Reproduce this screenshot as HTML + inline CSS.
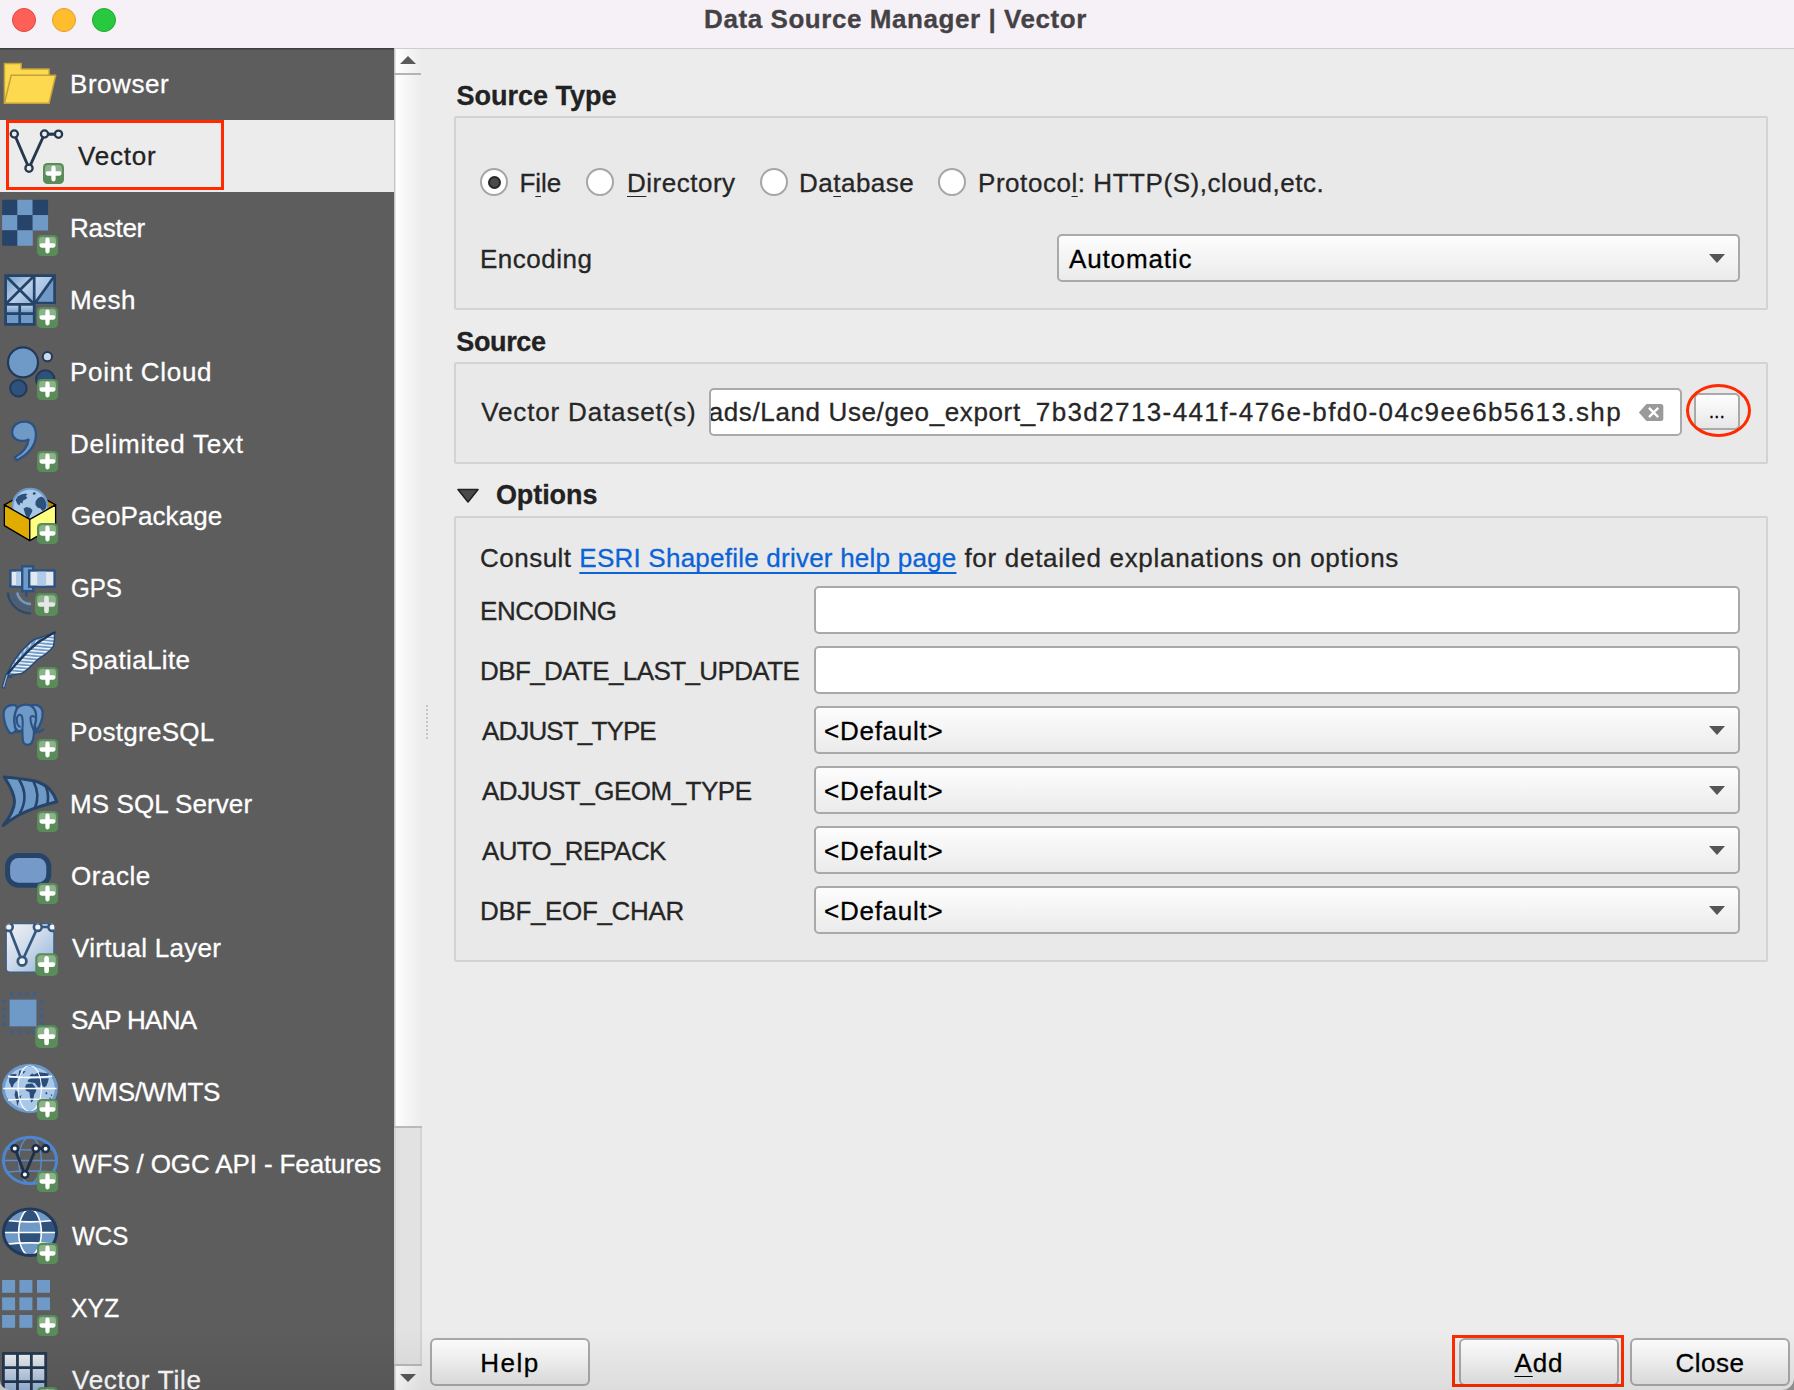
<!DOCTYPE html>
<html lang="en">
<head>
<meta charset="utf-8">
<title>Data Source Manager | Vector</title>
<style>
*{box-sizing:border-box;margin:0;padding:0}
html,body{width:1794px;height:1390px;overflow:hidden;background:#ececec}
body{font-family:"Liberation Sans",sans-serif;color:#262626;position:relative;font-size:26px;-webkit-text-stroke:0.3px currentColor}
.abs{position:absolute}
#titlebar{position:absolute;left:0;top:0;width:1794px;height:49px;background:#f6f0f7;border-bottom:1px solid #cfcbd0}
#title{position:absolute;left:0;width:1791px;top:4px;text-align:center;font-weight:bold;font-size:26px;line-height:30px;color:#444245;letter-spacing:0.56px}
.tl{position:absolute;top:8px;width:24px;height:24px;border-radius:50%}
#sidebar{position:absolute;left:0;top:48px;width:394px;height:1342px;background:#5d5d5d;overflow:hidden;box-shadow:inset 0 1.5px 0 #3f3f3f}
.item{position:absolute;left:0;width:394px;height:72px;color:#fff;font-size:26px;line-height:72px;white-space:nowrap}
.item span{position:absolute;left:70px;top:0;letter-spacing:0.45px}
.item.sel{background:#ececec;color:#222}
.item svg{position:absolute;left:0;top:0;width:72px;height:72px}
#vscroll{position:absolute;left:394px;top:49px;width:28px;height:1341px;background:linear-gradient(90deg,#c6c6c6 0,#c6c6c6 1px,#ffffff 2px,#f6f6f6 45%,#ececec 100%)}
.lbl{position:absolute;white-space:nowrap;line-height:32px;font-size:26px;color:#262626;letter-spacing:0.3px}
.hdr{position:absolute;white-space:nowrap;line-height:32px;font-size:27px;font-weight:bold;color:#222;letter-spacing:0.2px}
.gb{position:absolute;left:454px;width:1314px;background:#e9e9e9;border:2px solid #d3d3d3;border-radius:2px}
.radio{position:absolute;width:28px;height:28px;border-radius:50%;background:#fff;border:2px solid #a6a6a6}
.radio.on::after{content:"";position:absolute;left:5.5px;top:5.5px;width:9px;height:9px;border-radius:50%;background:#4a4a4a;border:2px solid #262626}
.field{position:absolute;background:#fff;border:2px solid #a9a9a9;border-radius:5px;height:48px}
.combo{position:absolute;border:2px solid #a9a9a9;border-radius:5px;height:48px;background:linear-gradient(#fdfdfd,#f4f4f4 50%,#ebebeb);font-size:26px;line-height:46px;padding-left:8px;color:#000;letter-spacing:0.3px}
.combo::after{content:"";position:absolute;right:13px;top:18px;border-left:8px solid transparent;border-right:8px solid transparent;border-top:9px solid #555}
.btn{position:absolute;border:2px solid #a9a9a9;border-radius:6px;background:linear-gradient(#fdfdfd,#f3f3f3 50%,#e6e6e6);font-size:26px;color:#000;text-align:center;letter-spacing:0.3px}
u{text-decoration:underline;text-underline-offset:3.5px;text-decoration-thickness:1.3px}
a{color:#0a64d8;text-decoration:underline;text-underline-offset:5px;text-decoration-thickness:1.5px}
.red{position:absolute;border:3px solid #ff2a00}
</style>
</head>
<body>
<div id="titlebar">
  <div class="tl" style="left:12px;background:#fe5f57;border:1px solid #e2463f"></div>
  <div class="tl" style="left:52px;background:#febc2e;border:1px solid #dfa123"></div>
  <div class="tl" style="left:92px;background:#28c840;border:1px solid #1dad2b"></div>
  <div id="title">Data Source Manager | Vector</div>
</div>

<div id="sidebar">
<div class="item" id="it-browser" style="top:0px"><!--I:browser--><svg viewBox="0 0 72 72" ><path d="M4.4 15.6 H21.2 V20.9 H49.1 V55.2 H4.4 Z" fill="#fdd94f" stroke="#c2a23a" stroke-width="1.5" stroke-linejoin="round"/><path d="M11.2 27.3 H55.7 L49.1 55.2 H4.4 Z" fill="#fdd94f" stroke="#c2a23a" stroke-width="1.5" stroke-linejoin="round"/></svg><!--/I:browser--><span style="left:70px;letter-spacing:0.54px">Browser</span></div>
<div class="item sel" id="it-vector" style="top:72px"><!--I:vector--><svg viewBox="0 0 72 72" ><path d="M14.3 14 L29 48.2 L44.5 14 L58.5 14.2" fill="none" stroke="#24384f" stroke-width="2.9" stroke-linejoin="round"/><circle cx="14.3" cy="14" r="3.6" fill="#ececec" stroke="#24384f" stroke-width="2.3"/><circle cx="44.5" cy="14" r="3.6" fill="#ececec" stroke="#24384f" stroke-width="2.3"/><circle cx="58.5" cy="14.2" r="3.6" fill="#ececec" stroke="#24384f" stroke-width="2.3"/><circle cx="29" cy="48.2" r="3.6" fill="#ececec" stroke="#24384f" stroke-width="2.3"/><g transform="translate(43 43) scale(1.0000)"><rect x="0" y="0" width="21" height="21" rx="4.6" fill="#5a8c5a"/><path d="M2 10.5 V5.4 a3.4 3.4 0 0 1 3.4-3.4 h10.2 a3.4 3.4 0 0 1 3.4 3.4 V10.5 Z" fill="#8bb28a"/><path d="M10.5 4.65 V16.35 M4.65 10.5 H16.35" stroke="#fff" stroke-width="4.3" stroke-linecap="round" fill="none"/></g></svg><!--/I:vector--><span style="left:78px;letter-spacing:0.77px">Vector</span></div>
<div class="item" id="it-raster" style="top:144px"><!--I:raster--><svg viewBox="0 0 72 72" ><rect x="2.10" y="7.80" width="15.45" height="15.45" fill="#26446a"/><rect x="17.35" y="7.80" width="15.45" height="15.45" fill="#6f9ac8"/><rect x="32.60" y="7.80" width="15.45" height="15.45" fill="#26446a"/><rect x="2.10" y="23.05" width="15.45" height="15.45" fill="#6f9ac8"/><rect x="17.35" y="23.05" width="15.45" height="15.45" fill="#26446a"/><rect x="32.60" y="23.05" width="15.45" height="15.45" fill="#6f9ac8"/><rect x="2.10" y="38.30" width="15.45" height="15.45" fill="#26446a"/><rect x="17.35" y="38.30" width="15.45" height="15.45" fill="#6f9ac8"/><g transform="translate(37 43) scale(1.0000)"><rect x="0" y="0" width="21" height="21" rx="4.6" fill="#5a8c5a"/><path d="M2 10.5 V5.4 a3.4 3.4 0 0 1 3.4-3.4 h10.2 a3.4 3.4 0 0 1 3.4 3.4 V10.5 Z" fill="#8bb28a"/><path d="M10.5 4.65 V16.35 M4.65 10.5 H16.35" stroke="#fff" stroke-width="4.3" stroke-linecap="round" fill="none"/></g></svg><!--/I:raster--><span style="left:70px;letter-spacing:-0.27px">Raster</span></div>
<div class="item" id="it-mesh" style="top:216px"><!--I:mesh--><svg viewBox="0 0 72 72" ><defs><linearGradient id="mg1" x1="0" y1="0" x2="1" y2="1"><stop offset="0" stop-color="#6f9ac8"/><stop offset="0.55" stop-color="#b9d0ea"/><stop offset="1" stop-color="#8fb1d9"/></linearGradient><linearGradient id="mg2" x1="0" y1="0" x2="1" y2="1"><stop offset="0" stop-color="#c4d7ee"/><stop offset="0.45" stop-color="#a9c5e6"/><stop offset="0.5" stop-color="#6f9ac8"/><stop offset="1" stop-color="#6f9ac8"/></linearGradient><linearGradient id="mg3" x1="0" y1="0" x2="0" y2="1"><stop offset="0" stop-color="#c0d4ec"/><stop offset="1" stop-color="#6f9ac8"/></linearGradient></defs><rect x="5.6" y="11.7" width="28.6" height="28.6" fill="url(#mg1)"/><rect x="34.2" y="11.7" width="20.4" height="28.6" fill="url(#mg2)"/><rect x="5.6" y="40.3" width="28" height="9.4" fill="url(#mg3)"/><rect x="5.6" y="49.7" width="28" height="10.6" fill="#6f9ac8"/><path d="M5.6 11.7 H54.6 V39 H34.2 V60.3 H5.6 Z M34.2 11.7 V40.3 M5.6 40.3 H34.2 M5.6 11.7 L34.2 40.3 M34.2 11.7 L5.6 40.3 M54.6 11.7 L34.2 40.3 M19.7 40.3 V60.3 M5.6 49.7 H34.2" fill="none" stroke="#264468" stroke-width="2.7" stroke-linejoin="miter"/><g transform="translate(37 43) scale(1.0000)"><rect x="0" y="0" width="21" height="21" rx="4.6" fill="#5a8c5a"/><path d="M2 10.5 V5.4 a3.4 3.4 0 0 1 3.4-3.4 h10.2 a3.4 3.4 0 0 1 3.4 3.4 V10.5 Z" fill="#8bb28a"/><path d="M10.5 4.65 V16.35 M4.65 10.5 H16.35" stroke="#fff" stroke-width="4.3" stroke-linecap="round" fill="none"/></g></svg><!--/I:mesh--><span style="left:70px;letter-spacing:0.66px">Mesh</span></div>
<div class="item" id="it-pointcloud" style="top:288px"><!--I:pointcloud--><svg viewBox="0 0 72 72" ><circle cx="45.3" cy="43.5" r="9.2" fill="#2f527c" stroke="#22395a" stroke-width="2"/><circle cx="23" cy="26.4" r="15" fill="#6f9ac8" stroke="#22395a" stroke-width="2.2"/><circle cx="47.4" cy="20.7" r="4.6" fill="#c9d9ec" stroke="#22395a" stroke-width="2"/><circle cx="18.4" cy="52.3" r="8.2" fill="#2f527c" stroke="#22395a" stroke-width="2"/><g transform="translate(37 43) scale(1.0000)"><rect x="0" y="0" width="21" height="21" rx="4.6" fill="#5a8c5a"/><path d="M2 10.5 V5.4 a3.4 3.4 0 0 1 3.4-3.4 h10.2 a3.4 3.4 0 0 1 3.4 3.4 V10.5 Z" fill="#8bb28a"/><path d="M10.5 4.65 V16.35 M4.65 10.5 H16.35" stroke="#fff" stroke-width="4.3" stroke-linecap="round" fill="none"/></g></svg><!--/I:pointcloud--><span style="left:70px;letter-spacing:0.71px">Point Cloud</span></div>
<div class="item" id="it-delimitedtext" style="top:360px"><!--I:delimitedtext--><svg viewBox="0 0 72 72" ><path d="M12.2 25.2 C11.6 17.2 18.5 13.2 25.5 13.6 C33.8 14.2 36.6 21.2 35.8 29.2 C34.8 40 26 47.6 16.6 52.4 L14.8 49.2 C21.6 45.4 27.6 40 28.6 31.6 C24.5 33.8 13 34 12.2 25.2 Z" fill="#6f9ac8" stroke="#2c5282" stroke-width="2.3" stroke-linejoin="round"/><g transform="translate(37 43) scale(1.0000)"><rect x="0" y="0" width="21" height="21" rx="4.6" fill="#5a8c5a"/><path d="M2 10.5 V5.4 a3.4 3.4 0 0 1 3.4-3.4 h10.2 a3.4 3.4 0 0 1 3.4 3.4 V10.5 Z" fill="#8bb28a"/><path d="M10.5 4.65 V16.35 M4.65 10.5 H16.35" stroke="#fff" stroke-width="4.3" stroke-linecap="round" fill="none"/></g></svg><!--/I:delimitedtext--><span style="left:70px;letter-spacing:0.79px">Delimited Text</span></div>
<div class="item" id="it-geopackage" style="top:432px"><!--I:geopackage--><svg viewBox="0 0 72 72" ><defs><clipPath id="gpc"><path d="M0 0 H72 V24.9 H55.6 L29.8 39.4 L4.35 24.9 H0 Z"/></clipPath></defs><path d="M4.35 24.9 L29.8 10.5 L55.6 24.9 L29.8 39.4 Z" fill="#b88a00" stroke="#000" stroke-width="1.3" stroke-linejoin="round"/><g clip-path="url(#gpc)"><circle cx="30" cy="26.4" r="17.6" fill="#a9c8e8" stroke="#6f9ac8" stroke-width="2"/><path d="M15.5 20 L17.5 16.5 L21 14.5 L25.5 13.5 L27.5 14.5 L25.5 16 L27.5 17.5 L25.5 19.5 L23 20.5 L22.5 23.5 L20.5 22.5 L19.5 25.5 L17.5 24 Z M23.5 28.5 L26.5 27 L30.5 28 L32.5 30.5 L31.5 33 L30 35.5 L29 39 L27 37.5 L25 33.5 Z M35.5 21.5 L38 18 L41.5 16.5 L44 18 L45.5 21 L46.5 25 L45.5 29 L42.5 31 L40.5 28.5 L37.5 27.5 L35.5 25 Z M32.5 13 L35 12 L36 14 L33.5 15 Z" fill="#2c5078"/></g><path d="M4.35 24.9 L29.8 39.4 V60.6 L4.35 45.6 Z" fill="#e0ac00" stroke="#000" stroke-width="1.3" stroke-linejoin="round"/><path d="M29.8 39.4 L55.6 24.9 V45.6 L29.8 60.6 Z" fill="#ffff80" stroke="#000" stroke-width="1.3" stroke-linejoin="round"/><g transform="translate(37 43) scale(1.0000)"><rect x="0" y="0" width="21" height="21" rx="4.6" fill="#5a8c5a"/><path d="M2 10.5 V5.4 a3.4 3.4 0 0 1 3.4-3.4 h10.2 a3.4 3.4 0 0 1 3.4 3.4 V10.5 Z" fill="#8bb28a"/><path d="M10.5 4.65 V16.35 M4.65 10.5 H16.35" stroke="#fff" stroke-width="4.3" stroke-linecap="round" fill="none"/></g></svg><!--/I:geopackage--><span style="left:71px;letter-spacing:0.10px">GeoPackage</span></div>
<div class="item" id="it-gps" style="top:504px"><!--I:gps--><svg viewBox="0 0 72 72" ><path d="M17.2 40.5 A13.8 13.8 0 0 0 31 52" fill="none" stroke="#6f9ac8" stroke-width="2.4"/><path d="M12.5 40.5 A18.5 18.5 0 0 0 31 56.7" fill="none" stroke="#3a6090" stroke-width="2.4"/><path d="M7.8 40.5 A23.2 23.2 0 0 0 31 61.4" fill="none" stroke="#2c4a6e" stroke-width="2.4"/><path d="M26.4 39.5 V45" stroke="#2c5282" stroke-width="2.6"/><rect x="10.4" y="18.5" width="12" height="16.2" fill="#e4e8f0" stroke="#2c5282" stroke-width="2.4"/><rect x="16" y="19.7" width="4.6" height="13.8" fill="#b0cbe8"/><rect x="22.2" y="14.3" width="11" height="24.8" fill="#6f9ac8" stroke="#2c5282" stroke-width="2.4"/><rect x="29.2" y="18.5" width="25.4" height="16.2" fill="#e4e8f0" stroke="#2c5282" stroke-width="2.4"/><rect x="37.2" y="19.7" width="9" height="13.8" fill="#b0cbe8"/><g transform="translate(35 41) scale(1.0952)"><rect x="0" y="0" width="21" height="21" rx="4.6" fill="#5a8c5a"/><path d="M2 10.5 V5.4 a3.4 3.4 0 0 1 3.4-3.4 h10.2 a3.4 3.4 0 0 1 3.4 3.4 V10.5 Z" fill="#8bb28a"/><path d="M10.5 4.65 V16.35 M4.65 10.5 H16.35" stroke="#e6e6e6" stroke-width="4.3" stroke-linecap="round" fill="none"/></g></svg><!--/I:gps--><span style="left:71px;letter-spacing:0px;transform:scaleX(0.928);transform-origin:0 0">GPS</span></div>
<div class="item" id="it-spatialite" style="top:576px"><!--I:spatialite--><svg viewBox="0 0 72 72" ><defs><pattern id="fp" width="6" height="3.3" patternUnits="userSpaceOnUse" patternTransform="rotate(5)"><rect width="6" height="3.3" fill="#6f9ac8"/><rect y="0" width="6" height="1.45" fill="#f4f8fc"/></pattern><clipPath id="fcl"><path d="M54.6 8.4 C49 10.5 45 12 41.4 13.2 C38 14 36 14.5 34.1 15.5 C31 17.5 28 20 25.8 22.4 C23 25.5 20.5 28 18.4 30.7 C15.5 34.5 13 38 11.5 40.8 C9.5 44.5 8 47.5 6.9 50.5 L9.2 51.2 C13 51.2 17.5 50.5 21.6 49.6 C24.5 47.8 27 45.8 29.5 43.6 C32 41 34.5 38.5 36.8 36.2 C40 33.8 43 32 46 29.8 C49 27.5 51.5 25 53.4 22.4 C54.5 18 54.8 13 54.6 8.4 Z"/></clipPath></defs><path d="M54.6 8.4 C49 10.5 45 12 41.4 13.2 C38 14 36 14.5 34.1 15.5 C31 17.5 28 20 25.8 22.4 C23 25.5 20.5 28 18.4 30.7 C15.5 34.5 13 38 11.5 40.8 C9.5 44.5 8 47.5 6.9 50.5 L9.2 51.2 C13 51.2 17.5 50.5 21.6 49.6 C24.5 47.8 27 45.8 29.5 43.6 C32 41 34.5 38.5 36.8 36.2 C40 33.8 43 32 46 29.8 C49 27.5 51.5 25 53.4 22.4 C54.5 18 54.8 13 54.6 8.4 Z" fill="url(#fp)"/><g clip-path="url(#fcl)"><path d="M54.6 8.4 C53.2 9.2 48.6 11.8 46.0 13.4 C43.4 15.0 41.4 16.2 39.1 17.8 C36.8 19.4 34.2 21.6 32.2 23.3 C30.2 25.0 28.7 26.5 27.0 28.2 C25.3 29.9 23.8 31.6 22.1 33.5 C20.4 35.4 18.4 37.6 16.6 39.6 C14.8 41.6 13.1 43.5 11.5 45.4 C9.9 47.3 7.7 50.1 6.9 51.0 L0 51 L0 0 L54.6 0 Z" fill="#6f9ac8"/><path d="M44 13.2 L41.8 16.4 M37.5 15.6 L35 19.4 M31 19.6 L28.6 23.4 M26 24.2 L23.6 28.2 M21.4 29.4 L19.4 33.2 M17 35 L15.4 38.6 M13.6 40.4 L12.2 43.6" stroke="#dbe7f5" stroke-width="1.1" fill="none"/></g><path d="M54.6 8.4 C49 10.5 45 12 41.4 13.2 C38 14 36 14.5 34.1 15.5 C31 17.5 28 20 25.8 22.4 C23 25.5 20.5 28 18.4 30.7 C15.5 34.5 13 38 11.5 40.8 C9.5 44.5 8 47.5 6.9 50.5 L9.2 51.2 C13 51.2 17.5 50.5 21.6 49.6 C24.5 47.8 27 45.8 29.5 43.6 C32 41 34.5 38.5 36.8 36.2 C40 33.8 43 32 46 29.8 C49 27.5 51.5 25 53.4 22.4 C54.5 18 54.8 13 54.6 8.4 Z" fill="none" stroke="#274a74" stroke-width="1.5" stroke-linejoin="round"/><path d="M54.6 8.4 C53.2 9.2 48.6 11.8 46.0 13.4 C43.4 15.0 41.4 16.2 39.1 17.8 C36.8 19.4 34.2 21.6 32.2 23.3 C30.2 25.0 28.7 26.5 27.0 28.2 C25.3 29.9 23.8 31.6 22.1 33.5 C20.4 35.4 18.4 37.6 16.6 39.6 C14.8 41.6 13.1 43.5 11.5 45.4 C9.9 47.3 7.7 50.1 6.9 51.0" fill="none" stroke="#1e3553" stroke-width="2.3" stroke-linecap="round"/><path d="M7.2 50.6 C5.8 54.5 4.4 59 3.5 63" fill="none" stroke="#274a74" stroke-width="3.4" stroke-linecap="round"/><path d="M7 51.4 C5.8 54.8 4.6 59 3.7 62.6" fill="none" stroke="#8fb1d9" stroke-width="1.3" stroke-linecap="round"/><path d="M8 52.6 C9.5 53.4 11 53.2 12.4 52.6" fill="none" stroke="#274a74" stroke-width="1.4"/><g transform="translate(37 43) scale(1.0000)"><rect x="0" y="0" width="21" height="21" rx="4.6" fill="#5a8c5a"/><path d="M2 10.5 V5.4 a3.4 3.4 0 0 1 3.4-3.4 h10.2 a3.4 3.4 0 0 1 3.4 3.4 V10.5 Z" fill="#8bb28a"/><path d="M10.5 4.65 V16.35 M4.65 10.5 H16.35" stroke="#fff" stroke-width="4.3" stroke-linecap="round" fill="none"/></g></svg><!--/I:spatialite--><span style="left:71px;letter-spacing:0.38px">SpatiaLite</span></div>
<div class="item" id="it-postgresql" style="top:648px"><!--I:postgresql--><svg viewBox="0 0 72 72" ><path d="M15 9.2 C8 8 3.2 12 3.6 19 C4 26 6 32 9.5 36.5 C12 38.5 15 36.5 16.5 33 C14 27 14 19 17 12.5 C16.8 10.5 16 9.5 15 9.2 Z" fill="#6f9ac8" stroke="#2c5282" stroke-width="2.3" stroke-linejoin="round"/><path d="M31 9.5 C37 7.5 42 10.5 42.6 16 C43 23 40 30 36 35.5 C34.5 30 35 22 32 15 Z" fill="#6f9ac8" stroke="#2c5282" stroke-width="2.3" stroke-linejoin="round"/><path d="M17 12.5 C19.5 8.5 27 7.5 31.5 10 C35.5 12.5 36.5 18 36 24 C35.5 28 34 31 34 35 C34 40 33.5 44 31.5 47 C29.5 49.8 25 49.5 23.5 46.5 C22.3 43.5 22.5 38 22.3 34 C19.5 36.5 15.5 35 14.8 30 C14 24 14.5 17 17 12.5 Z" fill="#6f9ac8" stroke="#2c5282" stroke-width="2.3" stroke-linejoin="round"/><path d="M22.3 34 C23 28 22.8 22 21.5 19.5 C19.5 17.5 16.8 19.5 16.8 23.5 C16.8 28 18.5 30.5 20.5 31" fill="none" stroke="#2c5282" stroke-width="2"/><path d="M34 35 C32 30 30 26 30.5 22 C31 19.5 33.5 19.5 34.5 21.5" fill="none" stroke="#2c5282" stroke-width="2"/><path d="M34.2 36.2 C37.5 36.5 41 35.5 43.3 33.6" fill="none" stroke="#2c5282" stroke-width="2.3" stroke-linecap="round"/><path d="M14.5 35.5 C17 37 20 36 22 34" fill="none" stroke="#2c5282" stroke-width="2"/><g transform="translate(37 43) scale(1.0000)"><rect x="0" y="0" width="21" height="21" rx="4.6" fill="#5a8c5a"/><path d="M2 10.5 V5.4 a3.4 3.4 0 0 1 3.4-3.4 h10.2 a3.4 3.4 0 0 1 3.4 3.4 V10.5 Z" fill="#8bb28a"/><path d="M10.5 4.65 V16.35 M4.65 10.5 H16.35" stroke="#fff" stroke-width="4.3" stroke-linecap="round" fill="none"/></g></svg><!--/I:postgresql--><span style="left:70px;letter-spacing:0.30px">PostgreSQL</span></div>
<div class="item" id="it-mssqlserver" style="top:720px"><!--I:mssqlserver--><svg viewBox="0 0 72 72" ><path d="M4.2 9 C18 10.5 30 11.5 38 14 C48 17.5 54 25 56.8 33.8 C42 37.5 28 42 18 47.5 C12 51 7 54.5 3.2 57.5 C10 49 14.5 42 14.5 33.5 C14.5 25 9.5 17 4.2 9 Z" fill="#6f9ac8" stroke="#264468" stroke-width="3" stroke-linejoin="round"/><path d="M19 11.5 C25 21 27 33 19.5 46 M33.5 13.5 C38 22 38.5 31 35 40 M46 19 C48.5 25 48.5 30 47.5 35.5" fill="none" stroke="#264468" stroke-width="2.6"/><g transform="translate(37 43) scale(1.0000)"><rect x="0" y="0" width="21" height="21" rx="4.6" fill="#5a8c5a"/><path d="M2 10.5 V5.4 a3.4 3.4 0 0 1 3.4-3.4 h10.2 a3.4 3.4 0 0 1 3.4 3.4 V10.5 Z" fill="#8bb28a"/><path d="M10.5 4.65 V16.35 M4.65 10.5 H16.35" stroke="#fff" stroke-width="4.3" stroke-linecap="round" fill="none"/></g></svg><!--/I:mssqlserver--><span style="left:70px;letter-spacing:0.08px">MS SQL Server</span></div>
<div class="item" id="it-oracle" style="top:792px"><!--I:oracle--><svg viewBox="0 0 72 72" ><rect x="7.6" y="15.6" width="41.2" height="29.6" rx="11" fill="#7599c9" stroke="#264468" stroke-width="5"/><g transform="translate(37 43) scale(1.0000)"><rect x="0" y="0" width="21" height="21" rx="4.6" fill="#5a8c5a"/><path d="M2 10.5 V5.4 a3.4 3.4 0 0 1 3.4-3.4 h10.2 a3.4 3.4 0 0 1 3.4 3.4 V10.5 Z" fill="#8bb28a"/><path d="M10.5 4.65 V16.35 M4.65 10.5 H16.35" stroke="#fff" stroke-width="4.3" stroke-linecap="round" fill="none"/></g></svg><!--/I:oracle--><span style="left:71px;letter-spacing:0.53px">Oracle</span></div>
<div class="item" id="it-virtuallayer" style="top:864px"><!--I:virtuallayer--><svg viewBox="0 0 72 72" ><defs><linearGradient id="vg" x1="0" y1="0" x2="1" y2="1"><stop offset="0" stop-color="#f4f4f6"/><stop offset="0.5" stop-color="#cbd9ea"/><stop offset="1" stop-color="#8fb0d6"/></linearGradient><clipPath id="vc"><rect x="5.7" y="11.2" width="48.7" height="49.4" rx="4"/></clipPath></defs><rect x="6.2" y="11.7" width="47.7" height="48.4" rx="3.6" fill="url(#vg)" stroke="#3a5f8a" stroke-width="1.3"/><g clip-path="url(#vc)"><path d="M8.8 15 L22.1 49.2 L37.8 15 L52.3 15" fill="none" stroke="#36587f" stroke-width="2.7" stroke-linejoin="round"/><circle cx="8.8" cy="15" r="3.9" fill="#f4f4f4" stroke="#36587f" stroke-width="2.6"/><circle cx="37.8" cy="15" r="3.9" fill="#f4f4f4" stroke="#36587f" stroke-width="2.6"/><circle cx="52.3" cy="15" r="3.9" fill="#f4f4f4" stroke="#36587f" stroke-width="2.6"/><circle cx="22.1" cy="49.2" r="4.3" fill="#f4f4f4" stroke="#36587f" stroke-width="2.8"/></g><g transform="translate(35.2 41.2) scale(1.0857)"><rect x="0" y="0" width="21" height="21" rx="4.6" fill="#5a8c5a"/><path d="M2 10.5 V5.4 a3.4 3.4 0 0 1 3.4-3.4 h10.2 a3.4 3.4 0 0 1 3.4 3.4 V10.5 Z" fill="#8bb28a"/><path d="M10.5 4.65 V16.35 M4.65 10.5 H16.35" stroke="#fff" stroke-width="4.3" stroke-linecap="round" fill="none"/></g></svg><!--/I:virtuallayer--><span style="left:72px;letter-spacing:0.28px">Virtual Layer</span></div>
<div class="item" id="it-saphana" style="top:936px"><!--I:saphana--><svg viewBox="0 0 72 72" ><rect x="9.8" y="8.3" width="3.5" height="3.5" fill="#3d5f8a"/><rect x="9.8" y="46.4" width="3.5" height="3.5" fill="#3d5f8a"/><rect x="17.4" y="8.3" width="3.5" height="3.5" fill="#3d5f8a"/><rect x="17.4" y="46.4" width="3.5" height="3.5" fill="#3d5f8a"/><rect x="25.2" y="8.3" width="3.5" height="3.5" fill="#3d5f8a"/><rect x="25.2" y="46.4" width="3.5" height="3.5" fill="#3d5f8a"/><rect x="32.7" y="8.3" width="3.5" height="3.5" fill="#3d5f8a"/><rect x="32.7" y="46.4" width="3.5" height="3.5" fill="#3d5f8a"/><rect x="2.1" y="15.8" width="3.6" height="3.5" fill="#3d5f8a"/><rect x="40.4" y="15.8" width="3.6" height="3.5" fill="#3d5f8a"/><rect x="2.1" y="23.5" width="3.6" height="3.5" fill="#3d5f8a"/><rect x="40.4" y="23.5" width="3.6" height="3.5" fill="#3d5f8a"/><rect x="2.1" y="31.1" width="3.6" height="3.5" fill="#3d5f8a"/><rect x="40.4" y="31.1" width="3.6" height="3.5" fill="#3d5f8a"/><rect x="2.1" y="38.6" width="3.6" height="3.5" fill="#3d5f8a"/><rect x="40.4" y="38.6" width="3.6" height="3.5" fill="#3d5f8a"/><rect x="9.6" y="15.6" width="27" height="26.8" fill="#6f9ac8" stroke="#52759f" stroke-width="0.8"/><g transform="translate(35.2 41.2) scale(1.0857)"><rect x="0" y="0" width="21" height="21" rx="4.6" fill="#5a8c5a"/><path d="M2 10.5 V5.4 a3.4 3.4 0 0 1 3.4-3.4 h10.2 a3.4 3.4 0 0 1 3.4 3.4 V10.5 Z" fill="#8bb28a"/><path d="M10.5 4.65 V16.35 M4.65 10.5 H16.35" stroke="#fff" stroke-width="4.3" stroke-linecap="round" fill="none"/></g></svg><!--/I:saphana--><span style="left:71px;letter-spacing:-0.71px">SAP HANA</span></div>
<div class="item" id="it-wmswmts" style="top:1008px"><!--I:wmswmts--><svg viewBox="0 0 72 72" ><defs><clipPath id="wc"><ellipse cx="29.9" cy="32.3" rx="26.6" ry="22.9"/></clipPath></defs><ellipse cx="29.9" cy="32.4" rx="26.5" ry="23.1" fill="#a9c7e6" stroke="#6d99cc" stroke-width="3"/><g clip-path="url(#wc)"><path d="M10.6 18.3 L16.6 18.1 L16.1 20.1 L10.1 19.9 Z M19.3 14.6 L21.6 14.6 L20.3 20.1 L18.4 19.7 Z M23 15.5 L25.8 14.8 L23.2 18.3 Z M9.2 22 L18 22 L17 24.7 L13.8 27.9 L12.6 31.6 L11.2 31 L10.4 28.6 L9 26.1 Z M15.5 34.2 L18.4 36.2 L19.3 40.4 L21.6 39 L20.3 43.1 L18.4 46.4 L17.3 50.5 L16.5 45.4 L14.5 39 Z M29.5 19.4 L32.2 17.4 L34 18.6 L39.1 16.2 L48.8 17.6 L48.3 20.1 L40 20.3 L34.5 20.3 L31 20.2 Z M28.5 23.4 L31 22.4 L48.8 22.3 L47.9 26.1 L46.5 29.8 L44.4 31.6 L42.6 30 L41.4 27.9 L39.8 31.6 L38.4 31.4 L36.8 29.8 L35 27 L32 26.4 L29.5 26.2 L27.4 25.4 Z M26.7 27.9 L32.2 27.5 L35 30.7 L36.4 34.4 L34.1 39 L33.1 44.5 L31.3 46.8 L29.9 40.8 L29.5 36.2 L25.8 34.4 L25.2 30.4 Z M45.4 36.6 L47 36 L47.4 38 L45.8 38.6 Z M50.6 38 L52.4 39 L51.4 40.4 Z M49.2 41.4 L51.2 42 L50 43.6 Z" fill="#2b4d79"/><ellipse cx="29.7" cy="32.3" rx="11.6" ry="22.9" fill="none" stroke="#fff" stroke-width="1.1"/><path d="M3 32.5 H57 M8 20.3 C20 21.6 40 21.6 52 20.3 M8 44 C20 43 40 43 52 44" fill="none" stroke="#fff" stroke-width="1.4"/></g><g transform="translate(37 43) scale(1.0000)"><rect x="0" y="0" width="21" height="21" rx="4.6" fill="#5a8c5a"/><path d="M2 10.5 V5.4 a3.4 3.4 0 0 1 3.4-3.4 h10.2 a3.4 3.4 0 0 1 3.4 3.4 V10.5 Z" fill="#8bb28a"/><path d="M10.5 4.65 V16.35 M4.65 10.5 H16.35" stroke="#fff" stroke-width="4.3" stroke-linecap="round" fill="none"/></g></svg><!--/I:wmswmts--><span style="left:72px;letter-spacing:-0.26px">WMS/WMTS</span></div>
<div class="item" id="it-wfsogcapifeatures" style="top:1080px"><!--I:wfsogcapifeatures--><svg viewBox="0 0 72 72" ><defs><clipPath id="fc"><ellipse cx="30" cy="32.4" rx="26.5" ry="23"/></clipPath></defs><g clip-path="url(#fc)"><ellipse cx="30" cy="32.4" rx="11.3" ry="23" fill="none" stroke="#5b8ac8" stroke-width="1.4"/><path d="M3 32.5 H57 M7 20.9 C20 22.2 40 22.2 53 20.9 M7 44 C20 42.8 40 42.8 53 44" fill="none" stroke="#5b8ac8" stroke-width="1.4"/></g><ellipse cx="30" cy="32.4" rx="26.6" ry="23.2" fill="none" stroke="#4d86d0" stroke-width="3"/><path d="M14.8 20.5 L24.9 46.6 L35.9 20.5 L45.6 20.7" fill="none" stroke="#1e2f47" stroke-width="2.8" stroke-linejoin="round"/><circle cx="14.8" cy="20.5" r="3.3" fill="#fff" stroke="#1e2f47" stroke-width="2.6"/><circle cx="35.9" cy="20.5" r="3.3" fill="#fff" stroke="#1e2f47" stroke-width="2.6"/><circle cx="45.6" cy="20.7" r="3.3" fill="#fff" stroke="#1e2f47" stroke-width="2.6"/><circle cx="24.9" cy="46.6" r="3.3" fill="#fff" stroke="#1e2f47" stroke-width="2.6"/><g transform="translate(37 43) scale(1.0000)"><rect x="0" y="0" width="21" height="21" rx="4.6" fill="#5a8c5a"/><path d="M2 10.5 V5.4 a3.4 3.4 0 0 1 3.4-3.4 h10.2 a3.4 3.4 0 0 1 3.4 3.4 V10.5 Z" fill="#8bb28a"/><path d="M10.5 4.65 V16.35 M4.65 10.5 H16.35" stroke="#fff" stroke-width="4.3" stroke-linecap="round" fill="none"/></g></svg><!--/I:wfsogcapifeatures--><span style="left:72px;letter-spacing:-0.12px">WFS / OGC API - Features</span></div>
<div class="item" id="it-wcs" style="top:1152px"><!--I:wcs--><svg viewBox="0 0 72 72" ><defs><clipPath id="cc"><ellipse cx="30" cy="32.3" rx="26.5" ry="23"/></clipPath><clipPath id="cm"><ellipse cx="30" cy="32.3" rx="11.3" ry="23"/></clipPath></defs><g clip-path="url(#cc)"><rect x="0" y="0" width="72" height="21" fill="#6f9ac8"/><rect x="0" y="21" width="72" height="11.5" fill="#2f527c"/><rect x="0" y="32.5" width="72" height="11.5" fill="#6f9ac8"/><rect x="0" y="44" width="72" height="20" fill="#2f527c"/><g clip-path="url(#cm)"><rect x="0" y="0" width="72" height="21" fill="#2f527c"/><rect x="0" y="21" width="72" height="11.5" fill="#6f9ac8"/><rect x="0" y="32.5" width="72" height="11.5" fill="#2f527c"/><rect x="0" y="44" width="72" height="20" fill="#6f9ac8"/></g><ellipse cx="30" cy="32.3" rx="11.3" ry="23" fill="none" stroke="#fff" stroke-width="1.6"/><path d="M3 32.5 H57 M7 20.5 C20 22 40 22 53 20.5 M7 44.2 C20 42.8 40 42.8 53 44.2" fill="none" stroke="#fff" stroke-width="1.7"/></g><ellipse cx="30" cy="32.3" rx="26.6" ry="23.2" fill="none" stroke="#22395a" stroke-width="3"/><g transform="translate(37 43) scale(1.0000)"><rect x="0" y="0" width="21" height="21" rx="4.6" fill="#5a8c5a"/><path d="M2 10.5 V5.4 a3.4 3.4 0 0 1 3.4-3.4 h10.2 a3.4 3.4 0 0 1 3.4 3.4 V10.5 Z" fill="#8bb28a"/><path d="M10.5 4.65 V16.35 M4.65 10.5 H16.35" stroke="#fff" stroke-width="4.3" stroke-linecap="round" fill="none"/></g></svg><!--/I:wcs--><span style="left:72px;letter-spacing:0px;transform:scaleX(0.927);transform-origin:0 0">WCS</span></div>
<div class="item" id="it-xyz" style="top:1224px"><!--I:xyz--><svg viewBox="0 0 72 72" ><rect x="2.1" y="8.0" width="13" height="12.8" fill="#6f9ac8"/><rect x="19.4" y="8.0" width="13" height="12.8" fill="#6f9ac8"/><rect x="37.0" y="8.0" width="13" height="12.8" fill="#6f9ac8"/><rect x="2.1" y="25.4" width="13" height="12.8" fill="#6f9ac8"/><rect x="19.4" y="25.4" width="13" height="12.8" fill="#6f9ac8"/><rect x="37.0" y="25.4" width="13" height="12.8" fill="#6f9ac8"/><rect x="2.1" y="43.0" width="13" height="12.8" fill="#6f9ac8"/><rect x="19.4" y="43.0" width="13" height="12.8" fill="#6f9ac8"/><g transform="translate(37 43) scale(1.0000)"><rect x="0" y="0" width="21" height="21" rx="4.6" fill="#5a8c5a"/><path d="M2 10.5 V5.4 a3.4 3.4 0 0 1 3.4-3.4 h10.2 a3.4 3.4 0 0 1 3.4 3.4 V10.5 Z" fill="#8bb28a"/><path d="M10.5 4.65 V16.35 M4.65 10.5 H16.35" stroke="#fff" stroke-width="4.3" stroke-linecap="round" fill="none"/></g></svg><!--/I:xyz--><span style="left:71px;letter-spacing:0px;transform:scaleX(0.955);transform-origin:0 0">XYZ</span></div>
<div class="item" id="it-vectortile" style="top:1296px"><!--I:vectortile--><svg viewBox="0 0 72 72" ><defs><linearGradient id="tg" x1="0" y1="0" x2="0" y2="1"><stop offset="0" stop-color="#efefef"/><stop offset="1" stop-color="#86a9d3"/></linearGradient></defs><rect x="3.4" y="9.45" width="42.3" height="43" fill="url(#tg)" stroke="#24384f" stroke-width="2.8"/><path d="M17.45 9.45 V53 M31.35 9.45 V53 M3.4 23.6 H45.7 M3.4 37.65 H45.7" stroke="#24384f" stroke-width="2.8" fill="none"/><g transform="translate(37 43) scale(1.0000)"><rect x="0" y="0" width="21" height="21" rx="4.6" fill="#5a8c5a"/><path d="M2 10.5 V5.4 a3.4 3.4 0 0 1 3.4-3.4 h10.2 a3.4 3.4 0 0 1 3.4 3.4 V10.5 Z" fill="#8bb28a"/><path d="M10.5 4.65 V16.35 M4.65 10.5 H16.35" stroke="#fff" stroke-width="4.3" stroke-linecap="round" fill="none"/></g></svg><!--/I:vectortile--><span style="left:72px;letter-spacing:0.75px">Vector Tile</span></div>
<div class="red" style="left:6px;top:72px;width:218px;height:70px"></div>
</div>

<div id="vscroll">
<svg class="abs" style="left:0;top:-1px" width="28" height="1342" viewBox="0 0 28 1342">
<polygon points="6,16 22,16 14,8" fill="#5a5a5a"/>
<rect x="0" y="25" width="27" height="2" fill="#b4b4b4"/>
<rect x="1" y="1079" width="26" height="238" fill="#e2e2e2" stroke="#d4d4d4" stroke-width="2"/>
<rect x="0" y="1078" width="28" height="2" fill="#b9b9b9"/>
<rect x="0" y="1316" width="28" height="2" fill="#b9b9b9"/>
<polygon points="6,1326 22,1326 14,1334" fill="#5a5a5a"/>
</svg>
</div>

<div id="main">

<div class="hdr" style="left:456.40px;top:80px;letter-spacing:0.02px">Source Type</div>
<div class="gb" style="top:116px;height:194px"></div>
<div class="radio on" style="left:480px;top:168px"></div><div class="lbl" style="left:519.50px;top:167px;letter-spacing:-0.09px">F<u>i</u>le</div>
<div class="radio" style="left:586px;top:168px"></div><div class="lbl" style="left:627.00px;top:167px;letter-spacing:0.51px"><u>D</u>irectory</div>
<div class="radio" style="left:760px;top:168px"></div><div class="lbl" style="left:799.10px;top:167px;letter-spacing:0.47px">Da<u>t</u>abase</div>
<div class="radio" style="left:938px;top:168px"></div><div class="lbl" style="left:978.00px;top:167px;letter-spacing:0.55px">Protoco<u>l</u>: HTTP(S),cloud,etc.</div>
<div class="lbl" style="left:480.00px;top:243px;letter-spacing:0.49px">Encoding</div>
<div class="combo" style="left:1057px;top:234px;width:683px;padding-left:10px;letter-spacing:0.85px">Automatic</div>

<div class="hdr" style="left:456.30px;top:326px;letter-spacing:-0.36px">Source</div>
<div class="gb" style="top:362px;height:102px"></div>
<div class="lbl" style="left:481.30px;top:396px;letter-spacing:0.84px">Vector Dataset(s)</div>
<div class="field" id="dsfield" style="left:709px;top:388px;width:973px;overflow:hidden"><div class="lbl" style="left:-2.3px;top:6px;color:#262626;letter-spacing:0.62px">ads/Land Use/geo_export_<span style="letter-spacing:1.39px">7b3d2713-441f-476e-bfd0-04c9ee6b5613.shp</span></div>
<svg class="abs" style="left:927px;top:13px" width="27" height="19" viewBox="0 0 32 22"><path d="M10 1 H27 a3 3 0 0 1 3 3 V18 a3 3 0 0 1 -3 3 H10 L1 11 Z" fill="#9a9a9a"/><path d="M13 5.5 L24 16.5 M24 5.5 L13 16.5" stroke="#fff" stroke-width="2.6" fill="none"/></svg>
</div>
<div class="btn" style="left:1694px;top:393px;width:46px;height:37px;border-radius:5px;font-size:18px;line-height:34px;letter-spacing:0.4px">...</div>
<div class="abs" style="left:1686px;top:384px;width:65px;height:53px;border:3px solid #ff2a00;border-radius:50%"></div>

<svg class="abs" style="left:456px;top:488px" width="26" height="16" viewBox="0 0 26 16"><polygon points="2,1.5 22,1.5 12,14" fill="#4a4a4a" stroke="#222" stroke-width="1.6" stroke-linejoin="round"/></svg>
<div class="hdr" style="left:495.90px;top:479px;letter-spacing:-0.07px">Options</div>
<div class="gb" style="top:516px;height:446px"></div>
<div class="lbl" style="left:480px;top:542px;letter-spacing:0.49px">Consult <a style="letter-spacing:0.23px">ESRI Shapefile driver help page</a><span style="letter-spacing:0.71px"> for detailed explanations on options</span></div>
<div class="lbl" style="left:480.00px;top:595px;letter-spacing:-0.44px">ENCODING</div>
<div class="field" style="left:814px;top:586px;width:926px"></div>
<div class="lbl" style="left:480.00px;top:655px;letter-spacing:-0.61px">DBF_DATE_LAST_UPDATE</div>
<div class="field" style="left:814px;top:646px;width:926px"></div>
<div class="lbl" style="left:482.00px;top:715px;letter-spacing:-0.88px">ADJUST_TYPE</div>
<div class="combo" style="left:814px;top:706px;width:926px;letter-spacing:0.74px">&lt;Default&gt;</div>
<div class="lbl" style="left:482.00px;top:775px;letter-spacing:-0.49px">ADJUST_GEOM_TYPE</div>
<div class="combo" style="left:814px;top:766px;width:926px;letter-spacing:0.74px">&lt;Default&gt;</div>
<div class="lbl" style="left:482.00px;top:835px;letter-spacing:-0.68px">AUTO_REPACK</div>
<div class="combo" style="left:814px;top:826px;width:926px;letter-spacing:0.74px">&lt;Default&gt;</div>
<div class="lbl" style="left:480.00px;top:895px;letter-spacing:-0.35px">DBF_EOF_CHAR</div>
<div class="combo" style="left:814px;top:886px;width:926px;letter-spacing:0.74px">&lt;Default&gt;</div>

<div class="btn" style="left:430px;top:1338px;width:160px;height:48px;line-height:46px;letter-spacing:1.5px">Help</div>
<div class="btn" style="left:1459px;top:1338px;width:160px;height:48px;line-height:46px;letter-spacing:0.9px"><u>A</u>dd</div>
<div class="btn" style="left:1630px;top:1338px;width:160px;height:48px;line-height:46px;letter-spacing:0.5px">Close</div>
<div class="red" style="left:1452px;top:1335px;width:172px;height:52px"></div>


<svg class="abs" style="left:425px;top:704px" width="4" height="38" viewBox="0 0 4 38"><rect x="1" y="1" width="2" height="2" fill="#c6c6c6"/><rect x="1" y="5" width="2" height="2" fill="#c6c6c6"/><rect x="1" y="9" width="2" height="2" fill="#c6c6c6"/><rect x="1" y="13" width="2" height="2" fill="#c6c6c6"/><rect x="1" y="17" width="2" height="2" fill="#c6c6c6"/><rect x="1" y="21" width="2" height="2" fill="#c6c6c6"/><rect x="1" y="25" width="2" height="2" fill="#c6c6c6"/><rect x="1" y="29" width="2" height="2" fill="#c6c6c6"/><rect x="1" y="33" width="2" height="2" fill="#c6c6c6"/></svg>
<div class="abs" style="left:0;top:1330px;width:1794px;height:60px;background:linear-gradient(rgba(0,0,0,0),rgba(0,0,0,0.065));pointer-events:none"></div>
<svg class="abs" style="left:0;top:1380px" width="10" height="10" viewBox="0 0 10 10"><path d="M0 0 A10 10 0 0 0 10 10 H0 Z" fill="#c4c4c4"/></svg>
<svg class="abs" style="left:1782px;top:1378px" width="12" height="12" viewBox="0 0 12 12"><path d="M12 0 A12 12 0 0 1 0 12 H12 Z" fill="#8e8e8e"/></svg>
</div>
</body>
</html>
